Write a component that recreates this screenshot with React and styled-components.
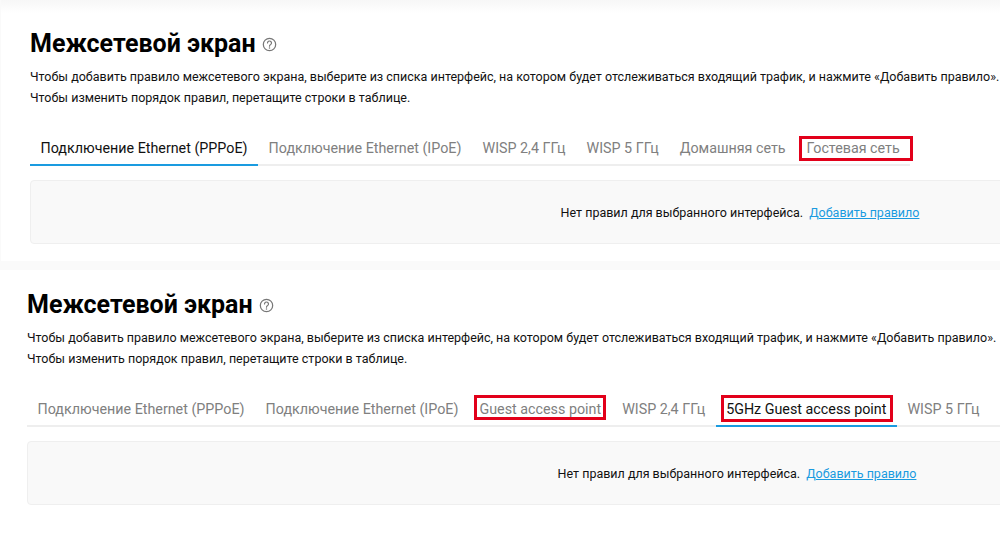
import React from 'react';
import styled, { createGlobalStyle } from 'styled-components';

const GlobalStyle = createGlobalStyle`
    html, body {
        margin: 0;
        height: 100%;
        overflow: hidden;
        background: #fff;
    }
    body {
        font-family: Roboto, "Noto Sans", sans-serif;
        color: #111;
    }
`;

const Page = styled.div`
    width: 1000px;
    height: 533px;
    overflow: hidden;
`;

// Upper capture sits on a grey strip, with a soft edge round the white panel
const TopCapture = styled.div`
    height: 270px;
    box-sizing: border-box;
    background: #fafafa;
    padding: 0 0 9px 1px;
`;

const TopPanel = styled.section`
    height: 261px;
    box-sizing: border-box;
    padding: 29px 0 0 29px;
    overflow: hidden;
    background: linear-gradient(#f7f7f7, #fff 13px);
`;

const BottomPanel = styled.section`
    height: 263px;
    box-sizing: border-box;
    padding: 20px 0 0 27px;
    overflow: hidden;
    background: #fff;
`;

const TitleRow = styled.div`
    display: flex;
    align-items: center;
    gap: 6px;
    height: 30px;
`;

const Title = styled.h1`
    margin: 0;
    font-size: 25px;
    line-height: 30px;
    font-weight: 700;
    color: #000;
    white-space: nowrap;
`;

const HelpIcon = styled.svg`
    width: 15px;
    height: 15px;
    flex: none;
    margin-top: 1px;
`;

const Description = styled.p`
    margin: 7px 0 0;
    font-size: 12.5px;
    line-height: 21px;
    color: #111;
    white-space: nowrap;
`;

const DescriptionLine = styled.span`
    display: block;
`;

const TabBar = styled.div`
    display: flex;
    width: ${(props) => (props.$stretch ? '100%' : 'fit-content')};
    margin-top: 22px;
    border-bottom: 2px solid #eeeeee;
    white-space: nowrap;
`;

const Tab = styled.div`
    position: relative;
    flex: none;
    padding: 0 10.5px;
    height: 36px;
    margin-bottom: -2px;
    box-sizing: border-box;
    font-size: 14.3px;
    line-height: 36px;
    color: ${(props) => (props.$active ? '#111' : '#808080')};
    border-bottom: 2px solid ${(props) => (props.$active ? '#1a9be0' : 'transparent')};
`;

// Red annotation frame drawn over a tab
const Marker = styled.span`
    position: absolute;
    top: ${(props) => props.$top}px;
    bottom: ${(props) => props.$bottom}px;
    left: ${(props) => props.$left}px;
    right: ${(props) => props.$right}px;
    border: 3px solid #e2001a;
`;

const EmptyBox = styled.div`
    display: flex;
    justify-content: center;
    align-items: center;
    gap: 6px;
    width: 1420px;
    height: 64px;
    margin-top: 14px;
    box-sizing: border-box;
    background: #f9f9f9;
    border: 1px solid #efefef;
    border-radius: 4px;
    font-size: 12.5px;
    color: #111;
    white-space: nowrap;
`;

const AddLink = styled.a`
    color: #1a9be0;
    text-decoration: underline;
`;

function QuestionIcon() {
    return (
        <HelpIcon viewBox="0 0 16 16" fill="none" stroke="#777" strokeWidth="1.3">
            <circle cx="8" cy="8" r="6.6" />
            <path d="M5.9 6.4a2.1 2.1 0 1 1 3.3 1.7c-.8.5-1.2.9-1.2 1.7" strokeLinecap="round" />
            <circle cx="8" cy="11.6" r=".8" fill="#777" stroke="none" />
        </HelpIcon>
    );
}

function FirewallSection({ tabs, stretchTabs }) {
    return (
        <>
            <TitleRow>
                <Title>Межсетевой экран</Title>
                <QuestionIcon />
            </TitleRow>
            <Description>
                <DescriptionLine>Чтобы добавить правило межсетевого экрана, выберите из списка интерфейс, на котором будет отслеживаться входящий трафик, и нажмите «Добавить правило».</DescriptionLine>
                <DescriptionLine>Чтобы изменить порядок правил, перетащите строки в таблице.</DescriptionLine>
            </Description>
            <TabBar $stretch={stretchTabs}>
                {tabs.map((tab) => (
                    <Tab key={tab.label} $active={tab.active}>
                        {tab.label}
                        {tab.marker && (
                            <Marker
                                $top={tab.marker.top}
                                $right={tab.marker.right}
                                $bottom={tab.marker.bottom}
                                $left={tab.marker.left}
                            />
                        )}
                    </Tab>
                ))}
            </TabBar>
            <EmptyBox>
                <span>Нет правил для выбранного интерфейса.</span>
                <AddLink href="#">Добавить правило</AddLink>
            </EmptyBox>
        </>
    );
}

const topTabs = [
    { label: 'Подключение Ethernet (PPPoE)', active: true },
    { label: 'Подключение Ethernet (IPoE)' },
    { label: 'WISP 2,4 ГГц' },
    { label: 'WISP 5 ГГц' },
    { label: 'Домашняя сеть' },
    { label: 'Гостевая сеть', marker: { top: 6, right: -3, bottom: 3, left: 3 } },
];

const bottomTabs = [
    { label: 'Подключение Ethernet (PPPoE)' },
    { label: 'Подключение Ethernet (IPoE)' },
    { label: 'Guest access point', marker: { top: 4, right: 6, bottom: 5, left: 5 } },
    { label: 'WISP 2,4 ГГц' },
    { label: '5GHz Guest access point', active: true, marker: { top: 4, right: 4, bottom: 3, left: 5 } },
    { label: 'WISP 5 ГГц' },
];

export default function App() {
    return (
        <Page>
            <GlobalStyle />
            <TopCapture>
                <TopPanel>
                    <FirewallSection tabs={topTabs} />
                </TopPanel>
            </TopCapture>
            <BottomPanel>
                <FirewallSection tabs={bottomTabs} stretchTabs />
            </BottomPanel>
        </Page>
    );
}
